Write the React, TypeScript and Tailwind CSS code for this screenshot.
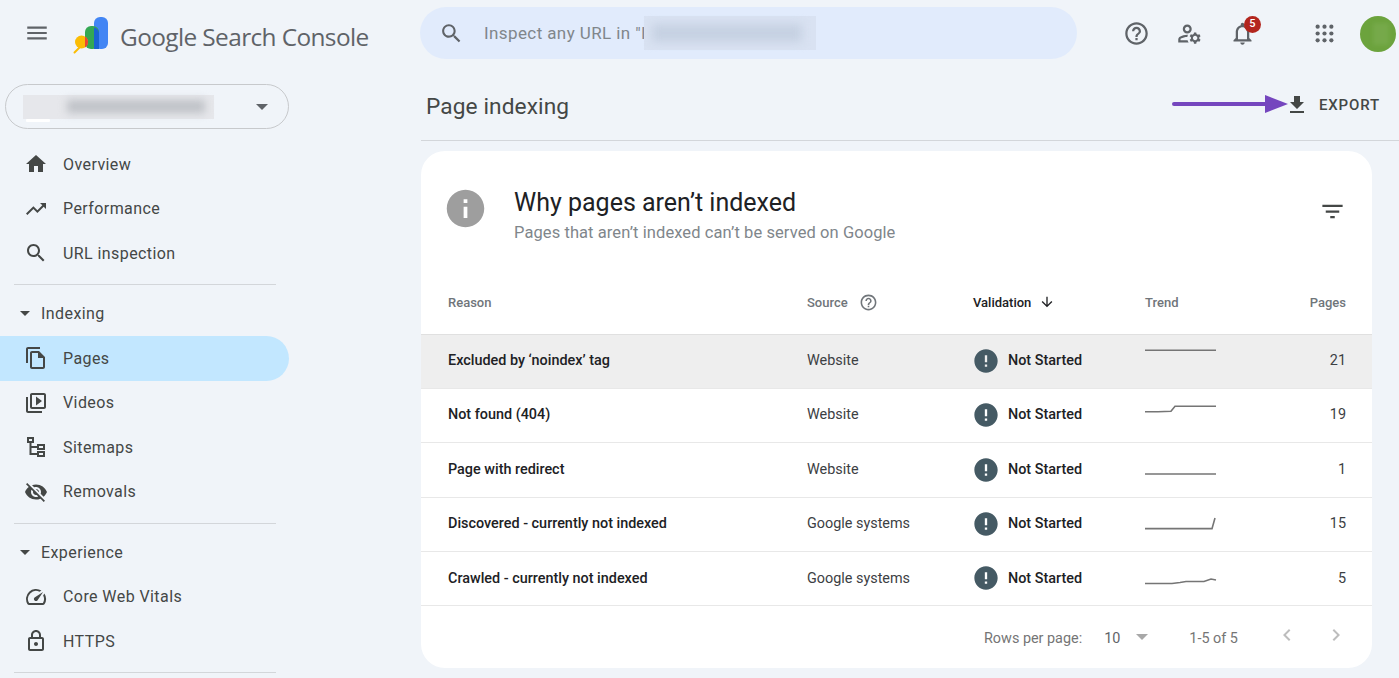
import type { ReactNode } from "react"

const ICONS: Record<string, string> = {
  home: "M10 20v-6h4v6h5v-8h3L12 3 2 12h3v8z",
  trend: "M16 6l2.29 2.29-4.88 4.88-4-4L2 16.59 3.41 18l6-6 4 4 6.3-6.29L22 12V6z",
  search: "M15.5 14h-.79l-.28-.27C15.41 12.59 16 11.11 16 9.5 16 5.91 13.09 3 9.5 3S3 5.91 3 9.5 5.91 16 9.5 16c1.61 0 3.09-.59 4.23-1.57l.27.28v.79l5 4.99L20.49 19l-4.99-5zm-6 0C7.01 14 5 11.99 5 9.5S7.01 5 9.5 5 14 7.01 14 9.5 11.99 14 9.5 14z",
  pages: "M16 1H4c-1.1 0-2 .9-2 2v14h2V3h12V1zm-1 4H8c-1.1 0-1.99.9-1.99 2L6 21c0 1.1.89 2 1.99 2H19c1.1 0 2-.9 2-2V11l-6-6zM8 21V7h6v5h5v9H8z",
  videos: "M4 6H2v14c0 1.1.9 2 2 2h14v-2H4V6zm16-4H8c-1.1 0-2 .9-2 2v12c0 1.1.9 2 2 2h12c1.1 0 2-.9 2-2V4c0-1.1-.9-2-2-2zm0 14H8V4h12v12zM12 5.5v9l6-4.5z",
  sitemaps: "M3 2h7v6H7.5v3H13V9h8v6h-8v-2H7.5v5H13v-2h8v6h-8v-2H5.5V8H3V2zm2 2v2h3V4H5zm10 7v2h4v-2h-4zm0 7v2h4v-2h-4z",
  removals: "M12 7c2.76 0 5 2.24 5 5 0 .65-.13 1.26-.36 1.83l2.92 2.92c1.51-1.26 2.7-2.89 3.43-4.75-1.73-4.39-6-7.5-11-7.5-1.4 0-2.74.25-3.98.7l2.16 2.16C10.74 7.13 11.35 7 12 7zM2 4.27l2.28 2.28.46.46C3.08 8.3 1.78 10.02 1 12c1.73 4.39 6 7.5 11 7.5 1.55 0 3.03-.3 4.38-.84l.42.42L19.73 22 21 20.73 3.27 3 2 4.27zM7.53 9.8l1.55 1.55c-.05.21-.08.43-.08.65 0 1.66 1.34 3 3 3 .22 0 .44-.03.65-.08l1.55 1.55c-.67.33-1.41.53-2.2.53-2.76 0-5-2.24-5-5 0-.79.2-1.53.53-2.2zm4.31-.78l3.15 3.15.02-.16c0-1.66-1.34-3-3-3l-.17.01z",
  speed: "M20.38 8.57l-1.23 1.85a8 8 0 0 1-.22 7.58H5.07A8 8 0 0 1 15.58 6.85l1.85-1.23A10 10 0 0 0 3.35 19a2 2 0 0 0 1.72 1h13.85a2 2 0 0 0 1.74-1 10 10 0 0 0-.27-10.44zm-9.79 6.84a2 2 0 0 0 2.83 0l5.66-8.49-8.49 5.66a2 2 0 0 0 0 2.83z",
  lock: "M18 8h-1V6c0-2.76-2.24-5-5-5S7 3.24 7 6v2H6c-1.1 0-2 .9-2 2v10c0 1.1.9 2 2 2h12c1.1 0 2-.9 2-2V10c0-1.1-.9-2-2-2zM9 6c0-1.66 1.34-3 3-3s3 1.34 3 3v2H9V6zm9 14H6V10h12v10zm-6-3c1.1 0 2-.9 2-2s-.9-2-2-2-2 .9-2 2 .9 2 2 2z",
  help: "M11 18h2v-2h-2v2zm1-16C6.48 2 2 6.48 2 12s4.48 10 10 10 10-4.48 10-10S17.52 2 12 2zm0 18c-4.41 0-8-3.59-8-8s3.59-8 8-8 8 3.59 8 8-3.59 8-8 8zm0-14c-2.21 0-4 1.79-4 4h2c0-1.1.9-2 2-2s2 .9 2 2c0 2-3 1.75-3 5h2c0-2.25 3-2.5 3-5 0-2.21-1.79-4-4-4z",
  bell: "M12 22c1.1 0 2-.9 2-2h-4c0 1.1.9 2 2 2zm6-6v-5c0-3.07-1.63-5.64-4.5-6.32V4c0-.83-.67-1.5-1.5-1.5s-1.5.67-1.5 1.5v.68C7.64 5.36 6 7.92 6 11v5l-2 2v1h16v-1l-2-2zm-2 1H8v-6c0-2.48 1.51-4.5 4-4.5s4 2.02 4 4.5v6z",
  manage: "M4 18v-.65c0-.34.16-.66.41-.81C6.1 15.53 8.03 15 10 15c.03 0 .05 0 .08.01.1-.7.3-1.37.59-1.98-.22-.02-.44-.03-.67-.03-2.42 0-4.68.67-6.61 1.82-.88.52-1.39 1.5-1.39 2.53V20h9.26c-.42-.6-.75-1.28-.97-2H4zM10 12c2.21 0 4-1.79 4-4s-1.79-4-4-4-4 1.79-4 4 1.79 4 4 4zm0-6c1.1 0 2 .9 2 2s-.9 2-2 2-2-.9-2-2 .9-2 2-2zM20.75 16c0-.22-.03-.42-.06-.63l1.14-1.01-1-1.73-1.45.49c-.32-.27-.68-.48-1.08-.63L18 11h-2l-.3 1.49c-.4.15-.76.36-1.08.63l-1.45-.49-1 1.73 1.14 1.01c-.03.21-.06.41-.06.63s.03.42.06.63l-1.14 1.01 1 1.73 1.45-.49c.32.27.68.48 1.08.63L16 21h2l.3-1.49c.4-.15.76-.36 1.08-.63l1.45.49 1-1.73-1.14-1.01c.03-.21.06-.41.06-.63zM17 18c-1.1 0-2-.9-2-2s.9-2 2-2 2 .9 2 2-.9 2-2 2z",
  download: "M5 20h14v-2H5v2zM19 9h-4V3H9v6H5l7 7 7-7z",
  filter: "M10 18h4v-2h-4v2zM3 6v2h18V6H3zm3 7h12v-2H6v2z",
  info: "M12 2C6.48 2 2 6.48 2 12s4.48 10 10 10 10-4.48 10-10S17.52 2 12 2zm1 15h-2v-6h2v6zm0-8h-2V7h2v2z",
  error: "M12 2C6.48 2 2 6.48 2 12s4.48 10 10 10 10-4.48 10-10S17.52 2 12 2zm1 15h-2v-2h2v2zm0-4h-2V7h2v6z",
  down: "M20 12l-1.41-1.41L13 16.17V4h-2v12.17l-5.58-5.59L4 12l8 8 8-8z",
  menu: "M3 18h18v-2H3v2zm0-5h18v-2H3v2zm0-7v2h18V6H3z",
  left: "M15.41 7.41L14 6l-6 6 6 6 1.41-1.41L10.83 12z",
  right: "M10 6L8.59 7.41 13.17 12l-4.58 4.59L10 18l6-6z",
}

function Icon({ name, className }: { name: string; className: string }) {
  return (
    <svg viewBox="0 0 24 24" className={className} fill="currentColor">
      <path d={ICONS[name]} />
    </svg>
  )
}

function NavItem({ icon, label, active }: { icon: string; label: string; active?: boolean }) {
  return (
    <div className={`flex h-[44.5px] w-[289px] items-center rounded-r-full pl-[24px] text-[#444746] ${active ? "bg-[#c2e7ff] text-[#1f1f1f]" : ""}`}>
      <Icon name={icon} className="h-[24px] w-[24px] shrink-0" />
      <span className="ml-[15px] mt-[1px] text-[16px] font-[450] tracking-[0.42px]">{label}</span>
    </div>
  )
}

function NavHead({ label }: { label: string }) {
  return (
    <div className="flex h-[44.5px] items-center pl-[20px] text-[#444746]">
      <span className="h-0 w-0 border-x-[5px] border-t-[5px] border-x-transparent border-t-[#444746]" />
      <span className="ml-[11px] mt-[1px] text-[16px] font-[450] tracking-[0.42px]">{label}</span>
    </div>
  )
}

function Divider({ className }: { className: string }) {
  return <div className={`ml-[14px] h-px w-[262px] bg-[#d3d6da] ${className}`} />
}

const rows: { reason: string; source: string; pages: number; spark: string; hover?: boolean }[] = [
  { reason: "Excluded by ‘noindex’ tag", source: "Website", pages: 21, spark: "M0 15.3H71", hover: true },
  { reason: "Not found (404)", source: "Website", pages: 19, spark: "M0 22.8H13L26 22.3L30 17.3H71" },
  { reason: "Page with redirect", source: "Website", pages: 1, spark: "M0 31H71" },
  { reason: "Discovered - currently not indexed", source: "Google systems", pages: 15, spark: "M0 30.6H67L70 20" },
  { reason: "Crawled - currently not indexed", source: "Google systems", pages: 5, spark: "M0 31.5H27L35 30.5L41 29.5H59L66 27L71 28" },
]

const grid = "grid grid-cols-[359px_166px_172px_1fr] pl-[27px] pr-[26px]"

function HeaderCell({ children, className }: { children: ReactNode; className?: string }) {
  return <div className={`flex items-center text-[13px] font-medium text-[#70757a] ${className ?? ""}`}>{children}</div>
}

export default function App() {
  return (
    <div className="flex h-[678px] w-[1399px] flex-col overflow-hidden bg-[#f0f4f9] font-['Roboto',sans-serif]">
      <header className="flex h-[67px] shrink-0 items-center">
        <div className="flex w-[420px] items-center pl-[24px]">
          <Icon name="menu" className="h-[26px] w-[26px] text-[#5f6368]" />
          <svg viewBox="0 0 38 38" className="ml-[22px] mt-[4px] h-[38px] w-[38px] shrink-0">
            <rect x="22" y="1" width="14" height="32" rx="6" fill="#4285f4" />
            <rect x="13" y="10" width="14" height="23" rx="6" fill="#34a853" />
            <path d="M22 11.5a6 6 0 0 1 5 5.5V33h-5z" fill="#1a64d1" />
            <path d="M8 31L2.5 36.5" stroke="#fbbc04" strokeWidth="2" strokeLinecap="round" />
            <circle cx="9.5" cy="26" r="6.5" fill="#fbbc04" />
            <path d="M13 20.5a6.5 6.5 0 0 1 0 11z" fill="#ea4335" />
          </svg>
          <span className="ml-[10px] mt-[8px] whitespace-nowrap font-['Open_Sans',sans-serif] text-[24.4px] tracking-[-0.6px] text-[#5f6368]">Google Search Console</span>
        </div>
        <div className="mt-[-1px] flex h-[52px] w-[657px] items-center overflow-hidden rounded-full bg-[#e1ebfc] pl-[19px]">
          <Icon name="search" className="h-[25px] w-[25px] text-[#5f6368]" />
          <span className="ml-[20px] mt-[2px] text-[17px] tracking-[0.4px] text-[#80868b]">Inspect any URL in "I</span>
          <div className="ml-[-2px] flex h-[34px] w-[172px] items-center bg-[#d9e2f2]">
            <div className="ml-[8px] h-[18px] w-[150px] bg-[#c6d1e2] blur-[5px]" />
          </div>
        </div>
        <div className="flex flex-1 items-center">
          <Icon name="help" className="ml-[46px] h-[27px] w-[27px] text-[#5f6368]" />
          <Icon name="manage" className="ml-[26px] h-[27px] w-[27px] text-[#5f6368]" />
          <div className="relative ml-[26px]">
            <Icon name="bell" className="h-[27px] w-[27px] text-[#5f6368]" />
            <span className="absolute left-[15px] top-[-4px] flex h-[17px] w-[17px] items-center justify-center rounded-full bg-[#b3261e] text-[11px] font-medium text-white">5</span>
          </div>
          <svg viewBox="0 0 18 18" className="ml-[59px] h-[19px] w-[19px] text-[#5f6368]" fill="currentColor">
            <circle cx="2.5" cy="2.5" r="2" /><circle cx="9" cy="2.5" r="2" /><circle cx="15.5" cy="2.5" r="2" />
            <circle cx="2.5" cy="9" r="2" /><circle cx="9" cy="9" r="2" /><circle cx="15.5" cy="9" r="2" />
            <circle cx="2.5" cy="15.5" r="2" /><circle cx="9" cy="15.5" r="2" /><circle cx="15.5" cy="15.5" r="2" />
          </svg>
          <div className="ml-[26px] flex h-[36px] w-[36px] items-center justify-center overflow-hidden rounded-full bg-[#6ca33d]">
            <div className="ml-[6px] h-[22px] w-[16px] bg-[#76a94a] blur-[2px]" />
          </div>
        </div>
      </header>

      <div className="flex min-h-0 flex-1">
        <aside className="w-[421px] shrink-0">
          <div className="ml-[5px] mt-[17px] flex h-[45px] w-[284px] items-center rounded-full border border-[#c7c9cc]">
            <div className="relative ml-[17px] flex h-[24px] w-[191px] items-center bg-[#e6e7eb]">
              <div className="ml-[44px] h-[13px] w-[138px] bg-[#bec1c6] blur-[4px]" />
              <div className="absolute bottom-[-3px] left-[3px] h-[3px] w-[24px] rounded-[1px] bg-white" />
            </div>
            <span className="ml-[42px] h-0 w-0 border-x-[6px] border-t-[6px] border-x-transparent border-t-[#5f6368]" />
          </div>
          <nav className="mt-[13px]">
            <NavItem icon="home" label="Overview" />
            <NavItem icon="trend" label="Performance" />
            <NavItem icon="search" label="URL inspection" />
            <Divider className="mt-[8px]" />
            <div className="mt-[7px]">
              <NavHead label="Indexing" />
            </div>
            <NavItem icon="pages" label="Pages" active />
            <NavItem icon="videos" label="Videos" />
            <NavItem icon="sitemaps" label="Sitemaps" />
            <NavItem icon="removals" label="Removals" />
            <Divider className="mt-[9px]" />
            <div className="mt-[6px]">
              <NavHead label="Experience" />
            </div>
            <NavItem icon="speed" label="Core Web Vitals" />
            <NavItem icon="lock" label="HTTPS" />
            <Divider className="mt-[8px]" />
          </nav>
        </aside>

        <main className="flex min-w-0 flex-1 flex-col">
          <div className="relative flex h-[74px] shrink-0 items-center justify-between border-b border-[#d3d6da] pl-[5px] pr-[19px]">
            <h1 className="mt-[7px] text-[22.7px] tracking-[0.1px] text-[#444746]">Page indexing</h1>
            <div className="mt-[3px] flex items-center text-[#444746]">
              <Icon name="download" className="h-[24px] w-[24px]" />
              <span className="ml-[10px] text-[15px] font-medium tracking-[0.85px]">EXPORT</span>
            </div>
            <svg viewBox="0 0 118 20" className="absolute left-[750px] top-[27px] h-[20px] w-[118px]">
              <path d="M3 10H96" stroke="#7546be" strokeWidth="4" strokeLinecap="round" />
              <path d="M94 1L117 10L94 19z" fill="#7546be" />
            </svg>
          </div>

          <section className="mt-[10px] h-[517px] w-[951px] overflow-hidden rounded-[24px] bg-white">
            <div className="flex h-[119px] items-start pl-[25px] pr-[26px]">
              <Icon name="info" className="ml-[-3px] mt-[35px] h-[45px] w-[45px] shrink-0 text-[#9e9e9e]" />
              <div className="ml-[26px] mt-[34px] flex-1">
                <h2 className="text-[25px] leading-[36px] text-[#202124]">Why pages aren’t indexed</h2>
                <p className="text-[16.5px] leading-[24px] tracking-[0.08px] text-[#80868b]">Pages that aren’t indexed can’t be served on Google</p>
              </div>
              <Icon name="filter" className="mt-[47px] h-[27px] w-[27px] text-[#444746]" />
            </div>

            <div className={`${grid} h-[64.5px] border-b border-[#e0e0e0] pt-[1px]`}>
              <HeaderCell>Reason</HeaderCell>
              <HeaderCell>
                Source
                <Icon name="help" className="ml-[11px] h-[19px] w-[19px] text-[#70757a]" />
              </HeaderCell>
              <HeaderCell className="text-[#202124]">
                Validation
                <Icon name="down" className="ml-[8px] h-[16px] w-[16px] text-[#202124]" />
              </HeaderCell>
              <div className="flex items-center justify-between">
                <HeaderCell>Trend</HeaderCell>
                <HeaderCell>Pages</HeaderCell>
              </div>
            </div>

            {rows.map((r) => (
              <div key={r.reason} className={`${grid} h-[54.4px] border-b border-[#e8e8e8] text-[14.4px] ${r.hover ? "bg-[#eeeeee]" : ""}`}>
                <div className="mb-[1.5px] flex items-center font-medium text-[#202124]">{r.reason}</div>
                <div className="mb-[1.5px] flex items-center text-[#3c4043]">{r.source}</div>
                <div className="mb-[1.5px] flex items-center font-medium text-[#202124]">
                  <Icon name="error" className="ml-[-1px] h-[28px] w-[28px] text-[#455a64]" />
                  <span className="ml-[8px]">Not Started</span>
                </div>
                <div className="flex items-center justify-between">
                  <svg viewBox="0 0 72 54" className="h-[54px] w-[72px] self-start" fill="none">
                    <path d={r.spark} stroke="#757575" strokeWidth="1.6" />
                  </svg>
                  <span className="mb-[1.5px] text-[#3c4043]">{r.pages}</span>
                </div>
              </div>
            ))}

            <div className="flex h-[62px] items-center text-[14.4px] text-[#757575]">
              <span className="ml-[563px] mt-[2px]">Rows per page:</span>
              <span className="ml-[22px] mt-[2px] text-[#5f6368]">10</span>
              <span className="ml-[16px] h-0 w-0 border-x-[6.5px] border-t-[6px] border-x-transparent border-t-[#a8a8a8]" />
              <span className="ml-[41px] mt-[2px]">1-5 of 5</span>
              <Icon name="left" className="ml-[37px] mt-[-5px] h-[24px] w-[24px] text-[#bdbdbd]" />
              <Icon name="right" className="ml-[25px] mt-[-5px] h-[24px] w-[24px] text-[#bdbdbd]" />
            </div>
          </section>
        </main>
      </div>
    </div>
  )
}
